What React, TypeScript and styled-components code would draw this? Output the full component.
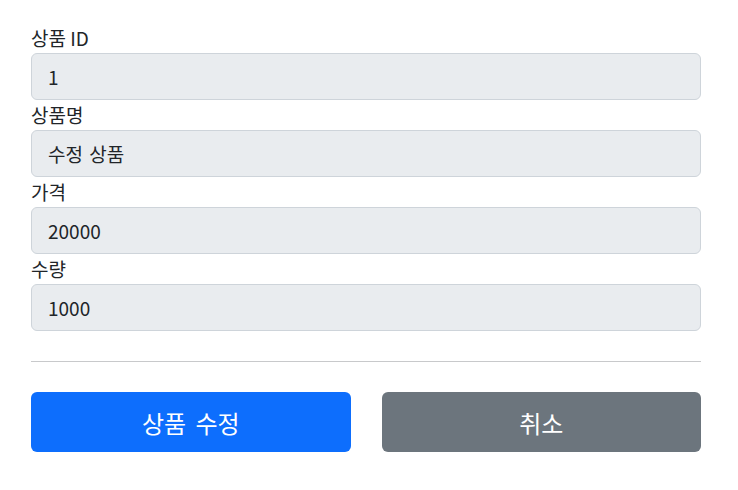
import styled, { createGlobalStyle } from "styled-components";

const GlobalStyle = createGlobalStyle`
  html, body {
    margin: 0;
    padding: 0;
    background: #fff;
    font-family: "Noto Sans CJK KR", "Noto Sans", sans-serif;
    color: #212529;
  }
`;

const Container = styled.div`
  width: 670px;
  padding: 23px 31px 0;
`;

const Field = styled.div`
  display: flex;
  flex-direction: column;
`;

const Label = styled.label`
  font-size: 19px;
  line-height: 30px;
  height: 30px;
`;

const Input = styled.input`
  box-sizing: border-box;
  width: 100%;
  height: 47px;
  padding: 0 16px;
  font-family: inherit;
  font-size: 19px;
  word-spacing: 2px;
  color: #212529;
  background-color: #e9ecef;
  border: 1px solid #ced4da;
  border-radius: 6px;
  outline: none;
`;

const Divider = styled.hr`
  border: none;
  border-top: 1px solid #c8c9cb;
  margin: 30px 0;
`;

const ButtonRow = styled.div`
  display: grid;
  grid-template-columns: 1fr 1fr;
  gap: 31px;
`;

const Button = styled.button<{ $variant: "primary" | "secondary" }>`
  height: 60px;
  border: none;
  border-radius: 6px;
  font-family: inherit;
  font-size: 24px;
  word-spacing: 4px;
  color: #fff;
  cursor: pointer;
  background-color: ${({ $variant }) =>
    $variant === "primary" ? "#0d6efd" : "#6c757d"};
`;

const fields = [
  { label: "상품 ID", value: "1" },
  { label: "상품명", value: "수정 상품" },
  { label: "가격", value: "20000" },
  { label: "수량", value: "1000" },
];

export default function App() {
  return (
    <>
      <GlobalStyle />
      <Container>
        {fields.map((f) => (
          <Field key={f.label}>
            <Label>{f.label}</Label>
            <Input value={f.value} readOnly />
          </Field>
        ))}
        <Divider />
        <ButtonRow>
          <Button $variant="primary">상품 수정</Button>
          <Button $variant="secondary">취소</Button>
        </ButtonRow>
      </Container>
    </>
  );
}
